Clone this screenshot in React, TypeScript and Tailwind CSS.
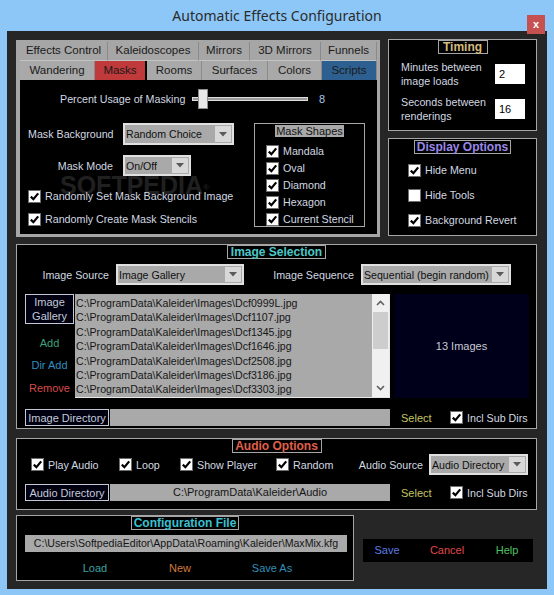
import type { ReactNode } from "react";
import clsx from "clsx";

const FONT = "font-['Liberation_Sans',Arial,sans-serif]";
const LABEL = "whitespace-nowrap text-[10.7px] leading-[14px] text-[#d2d8e2]";

function Check({ checked = true }: { checked?: boolean }) {
  return (
    <span className="flex h-[13px] w-[13px] shrink-0 items-center justify-center border border-[#6e6e6e] bg-white">
      {checked ? (
        <svg viewBox="0 0 11 11" className="h-[11px] w-[11px]">
          <path d="M1.8 5.6 L4.4 8.2 L9.2 2.4" fill="none" stroke="#000" strokeWidth="2.2" />
        </svg>
      ) : null}
    </span>
  );
}

function CheckRow({ label, checked = true, className }: { label: string; checked?: boolean; className?: string }) {
  return (
    <div className={clsx("flex items-center gap-[4px]", className)}>
      <Check checked={checked} />
      <span className={LABEL}>{label}</span>
    </div>
  );
}

function Dropdown({ value, className }: { value: string; className?: string }) {
  return (
    <div className={clsx("flex shrink-0 border-2 border-[#e0e0e0] bg-[#a9a9a9]", className)}>
      <span className="flex-1 self-center overflow-hidden whitespace-nowrap pl-[1px] text-[10.6px] leading-[14px] text-[#101010]">
        {value}
      </span>
      <span className="m-[1px] flex w-[16px] shrink-0 items-center justify-center bg-[#d8d8d8]">
        <svg viewBox="0 0 8 5" className="h-[5px] w-[8px]">
          <path d="M0 0 H8 L4 4.5 Z" fill="#5a5a5a" />
        </svg>
      </span>
    </div>
  );
}

function GroupTitle({ children, color, width, className }: { children: ReactNode; color: string; width: string; className?: string }) {
  return (
    <div
      className={clsx(
        "mx-auto flex h-[14px] shrink-0 items-center justify-center whitespace-nowrap border border-[#a6a6a6] text-[12px] font-bold leading-none",
        color,
        width,
        className
      )}
    >
      {children}
    </div>
  );
}

function NavyButton({ children, className }: { children: ReactNode; className?: string }) {
  return (
    <div
      className={clsx(
        "flex shrink-0 items-center justify-center whitespace-nowrap border border-[#c4c8d4] bg-[#000010] text-center text-[11px] leading-[14px] text-[#c4cad8]",
        className
      )}
    >
      {children}
    </div>
  );
}

const TABS_TOP: Array<[string, string]> = [
  ["Effects Control", "w-[88px]"],
  ["Kaleidoscopes", "w-[91px]"],
  ["Mirrors", "w-[51px]"],
  ["3D Mirrors", "w-[71px]"],
  ["Funnels", "w-[56px]"],
];

const TABS_BOTTOM: Array<[string, string, string]> = [
  ["Wandering", "w-[75px]", "bg-[#a9a9a9]"],
  ["Masks", "w-[52px]", "bg-[#c0393b] border-r-2 border-r-black"],
  ["Rooms", "w-[55px]", "bg-[#a9a9a9]"],
  ["Surfaces", "w-[66px]", "bg-[#a9a9a9]"],
  ["Colors", "w-[54px]", "bg-[#a9a9a9]"],
  ["Scripts", "w-[55px]", "bg-[#2d6090]"],
];

const IMAGES = [
  "Dcf0999L.jpg",
  "Dcf1107.jpg",
  "Dcf1345.jpg",
  "Dcf1646.jpg",
  "Dcf2508.jpg",
  "Dcf3186.jpg",
  "Dcf3303.jpg",
];

function TabControl() {
  return (
    <div className="mt-[1px] flex h-[197px] w-[364px] shrink-0 flex-col bg-[#a6a6a6] pb-[3px] pl-[4px] pr-[3px] pt-[2px]">
      <div className="flex h-[19px]">
        {TABS_TOP.map(([label, w]) => (
          <div
            key={label}
            className={clsx(
              "flex items-center justify-center border-b border-r border-b-[#c2c2c2] border-r-[#8a8a8a] text-[11.5px] text-[#1a1a1a]",
              w
            )}
          >
            {label}
          </div>
        ))}
      </div>
      <div className="flex h-[19px]">
        {TABS_BOTTOM.map(([label, w, bg]) => (
          <div
            key={label}
            className={clsx("flex items-center justify-center border-r border-r-[#8a8a8a] text-[11.5px] text-[#1a1a1a]", w, bg)}
          >
            {label}
          </div>
        ))}
      </div>
      <div className="relative flex flex-1 flex-col bg-black">
        {/* faint watermark that sits behind the mask options */}
        <span className="pointer-events-none absolute left-[40px] top-[93px] text-[25px] font-bold leading-none text-[#202020]">
          SOFTPEDIA<sup className="text-[8px]">®</sup>
        </span>
        <div className="relative mt-[12px] flex h-[14px] items-center">
          <span className={clsx(LABEL, "ml-[40px] w-[132px]")}>Percent Usage of Masking</span>
          <div className="relative h-[20px] w-[116px]">
            <div className="absolute left-0 right-0 top-[8px] h-[4px] border border-[#dcdcdc] bg-[#9a9a9a]" />
            <div className="absolute left-[6px] top-0 h-[20px] w-[10px] border border-[#8c8c8c] bg-[#e8e8e8]" />
          </div>
          <span className="ml-[11px] text-[11px] leading-[14px] text-[#a8c4ee]">8</span>
        </div>
        <div className="relative mt-[17px] flex">
          <div className="flex w-[234px] flex-col">
            <div className="flex h-[22px] items-center">
              <span className={clsx(LABEL, "w-[103px] pl-[8px]")}>Mask Background</span>
              <Dropdown value="Random Choice" className="h-[22px] w-[111px]" />
            </div>
            <div className="mt-[10px] flex h-[21px] items-center">
              <span className={clsx(LABEL, "w-[103px] pr-[10px] text-right")}>Mask Mode</span>
              <Dropdown value="On/Off" className="h-[21px] w-[68px]" />
            </div>
            <CheckRow className="ml-[8px] mt-[13px]" label="Randomly Set Mask Background Image" />
            <CheckRow className="ml-[8px] mt-[9px]" label="Randomly Create Mask Stencils" />
          </div>
          <div className="flex h-[104px] w-[111px] flex-col border border-[#a6a6a6]">
            <div className="mx-auto mt-[1px] flex h-[14px] w-[69px] items-center justify-center whitespace-nowrap bg-[#a9a9a9] text-[11px] leading-none text-[#111]">
              Mask Shapes
            </div>
            <div className="ml-[11px] mt-[7px] flex flex-col gap-[3px]">
              {["Mandala", "Oval", "Diamond", "Hexagon", "Current Stencil"].map((s) => (
                <CheckRow key={s} label={s} />
              ))}
            </div>
          </div>
        </div>
      </div>
    </div>
  );
}

function Timing() {
  return (
    <div className="flex h-[92px] flex-col border border-[#a6a6a6] bg-black">
      <GroupTitle color="text-[#d6ba7e]" width="w-[50px]">
        Timing
      </GroupTitle>
      <div className="mt-[6px] flex items-center justify-between pl-[12px] pr-[11px]">
        <span className={LABEL}>
          Minutes between
          <br />
          image loads
        </span>
        <div className="flex h-[20px] w-[30px] items-center bg-white pl-[4px] text-[11px] text-black">2</div>
      </div>
      <div className="mt-[7px] flex items-center justify-between pl-[12px] pr-[11px]">
        <span className={LABEL}>
          Seconds between
          <br />
          renderings
        </span>
        <div className="flex h-[20px] w-[30px] items-center bg-white pl-[4px] text-[11px] text-black">16</div>
      </div>
    </div>
  );
}

function DisplayOptions() {
  return (
    <div className="flex h-[98px] flex-col border border-[#a6a6a6] bg-black">
      <GroupTitle color="text-[#9a88e8]" width="w-[97px]" className="mt-[1px]">
        Display Options
      </GroupTitle>
      <div className="ml-[19px] mt-[9px] flex flex-col gap-[11px]">
        <CheckRow label="Hide Menu" />
        <CheckRow label="Hide Tools" checked={false} />
        <CheckRow label="Background Revert" />
      </div>
    </div>
  );
}

function DirectoryRow({ label, path, centered }: { label: string; path: string; centered?: boolean }) {
  return (
    <div className="flex h-[17px] items-center">
      <NavyButton className="ml-[8px] h-[17px] w-[84px]">{label}</NavyButton>
      <div
        className={clsx(
          "ml-[1px] flex h-[17px] w-[280px] items-center whitespace-nowrap bg-[#a9a9a9] text-[11px] text-[#151515]",
          centered && "justify-center"
        )}
      >
        {path}
      </div>
      <span className="ml-[11px] w-[30px] text-[11px] leading-[14px] text-[#c6c460]">Select</span>
      <CheckRow className="ml-[19px]" label="Incl Sub Dirs" />
    </div>
  );
}

function ImageSelection() {
  return (
    <div className="mt-[7px] flex h-[185px] w-[521px] flex-col border border-[#a6a6a6] bg-black">
      <GroupTitle color="text-[#4cc8c8]" width="w-[99px]">
        Image Selection
      </GroupTitle>
      <div className="mt-[5px] flex h-[21px] items-center">
        <span className={clsx(LABEL, "w-[92px] text-right")}>Image Source</span>
        <Dropdown value="Image Gallery" className="ml-[7px] h-[21px] w-[128px]" />
        <span className={clsx(LABEL, "w-[110px] text-right")}>Image Sequence</span>
        <Dropdown value="Sequential (begin random)" className="ml-[7px] h-[21px] w-[150px]" />
      </div>
      <div className="mt-[9px] flex h-[104px]">
        <div className="ml-[8px] flex w-[49px] flex-col items-center">
          <NavyButton className="h-[30px] w-[49px]">
            Image
            <br />
            Gallery
          </NavyButton>
          <span className="mt-[12px] text-[11px] leading-[14px] text-[#3fa27a]">Add</span>
          <span className="mt-[8px] whitespace-nowrap text-[11px] leading-[14px] text-[#2f8fc0]">Dir Add</span>
          <span className="mt-[9px] text-[11px] leading-[14px] text-[#d84a4a]">Remove</span>
        </div>
        <div className="ml-[1px] flex w-[315px] border-b border-r border-[#e6e6e6] bg-[#a9a9a9]">
          <div className="flex flex-1 flex-col overflow-hidden pl-[1px] pt-[2px]">
            {IMAGES.map((f) => (
              <span key={f} className="h-[14.4px] whitespace-nowrap text-[10.6px] leading-[14px] text-[#161616]">
                C:\ProgramData\Kaleider\Images\{f}
              </span>
            ))}
          </div>
          <div className="flex w-[17px] flex-col items-center bg-[#f0f0f0]">
            <svg viewBox="0 0 9 6" className="mt-[6px] h-[6px] w-[9px]">
              <path d="M1 5 L4.5 1.5 L8 5" fill="none" stroke="#606060" strokeWidth="1.6" />
            </svg>
            <div className="mt-[6px] h-[37px] w-[15px] bg-[#cdcdcd]" />
            <div className="flex-1" />
            <svg viewBox="0 0 9 6" className="mb-[6px] h-[6px] w-[9px]">
              <path d="M1 1 L4.5 4.5 L8 1" fill="none" stroke="#606060" strokeWidth="1.6" />
            </svg>
          </div>
        </div>
        <div className="ml-[4px] flex w-[135px] items-center justify-center bg-[#00001a] text-[11px] text-[#c8cad2]">
          13 Images
        </div>
      </div>
      <div className="mt-[11px]">
        <DirectoryRow label="Image Directory" path="" />
      </div>
    </div>
  );
}

function AudioOptions() {
  return (
    <div className="mt-[9px] flex h-[72px] w-[521px] flex-col border border-[#a6a6a6] bg-black">
      <GroupTitle color="text-[#e0604a]" width="w-[90px]">
        Audio Options
      </GroupTitle>
      <div className="mt-[1px] flex h-[21px] items-center pl-[14px]">
        <CheckRow className="w-[88px]" label="Play Audio" />
        <CheckRow className="w-[61px]" label="Loop" />
        <CheckRow className="w-[96px]" label="Show Player" />
        <CheckRow className="w-[70px]" label="Random" />
        <span className={clsx(LABEL, "w-[77px] text-right")}>Audio Source</span>
        <Dropdown value="Audio Directory" className="ml-[6px] h-[21px] w-[99px]" />
      </div>
      <div className="mt-[9px]">
        <DirectoryRow label="Audio Directory" path="C:\ProgramData\Kaleider\Audio" centered />
      </div>
    </div>
  );
}

function ConfigFile() {
  return (
    <div className="flex h-[66px] w-[338px] flex-col border border-[#a6a6a6] bg-black">
      <GroupTitle color="text-[#3cc0d0]" width="w-[108px]">
        Configuration File
      </GroupTitle>
      <div className="ml-[8px] mt-[5px] flex h-[17px] w-[322px] items-center justify-center whitespace-nowrap bg-[#a9a9a9] text-[10.6px] text-[#151515]">
        C:\Users\SoftpediaEditor\AppData\Roaming\Kaleider\MaxMix.kfg
      </div>
      <div className="mt-[9px] flex text-[11px] leading-[14px]">
        <span className="ml-[28px] w-[100px] text-center text-[#3aa0a0]">Load</span>
        <span className="w-[70px] text-center text-[#d07a3a]">New</span>
        <span className="w-[114px] text-center text-[#3090b8]">Save As</span>
      </div>
    </div>
  );
}

export default function App() {
  return (
    <div className={clsx("flex h-[595px] w-[554px] flex-col bg-[#8cc7f7]", FONT)}>
      <div className="relative flex h-[31px] shrink-0 items-center justify-center">
        <span className="font-['Noto_Sans',sans-serif] text-[14px] text-[#2b2b2b]">
          Automatic Effects Configuration
        </span>
        <span className="absolute right-[9px] top-[15px] z-10 flex h-[19px] w-[18px] items-center justify-center bg-[#c75050] text-[11px] font-bold leading-none text-white">
          x
        </span>
      </div>
      <div className="mx-[7px] h-[558px] shrink-0 bg-[#262626] pl-[9px] pt-[8px]">
        <div className="flex gap-[8px]">
          <TabControl />
          <div className="flex w-[149px] flex-col gap-[7px]">
            <Timing />
            <DisplayOptions />
          </div>
        </div>
        <ImageSelection />
        <AudioOptions />
        <div className="mt-[5px] flex">
          <ConfigFile />
          <div className="ml-[9px] mt-[24px] flex h-[23px] w-[170px] items-center bg-black text-[11px]">
            <span className="w-[48px] text-center text-[#5a7ee8]">Save</span>
            <span className="w-[72px] text-center text-[#e04848]">Cancel</span>
            <span className="w-[48px] text-center text-[#50c060]">Help</span>
          </div>
        </div>
      </div>
    </div>
  );
}
